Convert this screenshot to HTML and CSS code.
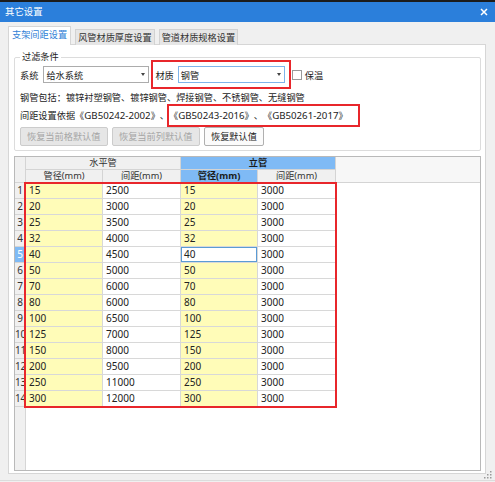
FILE: index.html
```html
<!DOCTYPE html>
<html lang="zh">
<head>
<meta charset="utf-8">
<title>其它设置</title>
<link rel="stylesheet" href="styles.css">
</head>
<body>
<div class="window">
  <div class="titlebar">
    <span class="title">其它设置</span>
    <svg class="close" width="8" height="8" viewBox="0 0 8 8"><path d="M1 1L7 7M7 1L1 7" stroke="#fff" stroke-width="1.5" fill="none"/></svg>
  </div>
  <div class="main">
    <div class="tabs">
      <div class="tab active">支架间距设置</div>
      <div class="tab">风管材质厚度设置</div>
      <div class="tab">管道材质规格设置</div>
    </div>
    <div class="panel">
      <fieldset class="group">
        <legend>过滤条件</legend>
        <div class="row r1">
          <span class="lbl">系统</span>
          <div class="combo sys"><span>给水系统</span><i class="arrow"></i></div>
          <span class="lbl lbl2">材质</span>
          <div class="combo mat"><span>钢管</span><i class="arrow"></i></div>
          <span class="check"></span>
          <span>保温</span>
        </div>
        <div class="row txt r2">钢管包括：镀锌衬塑钢管、镀锌钢管、焊接钢管、不锈钢管、无缝钢管</div>
        <div class="row txt">间距设置依据《<span class="lat">GB50242-2002</span>》、《<span class="lat">GB50243-2016</span>》、《<span class="lat">GB50261-2017</span>》</div>
        <div class="row btns">
          <button class="btn" disabled>恢复当前格默认值</button>
          <button class="btn" disabled>恢复当前列默认值</button>
          <button class="btn on">恢复默认值</button>
        </div>
      </fieldset>
      <div class="grid">
        <div class="gt">
          <div class="h corner"></div>
          <div class="h g1">水平管</div>
          <div class="h g2 blue bold">立管</div>
          <div class="h fill"></div>
          <div class="h">管径(mm)</div>
          <div class="h">间距(mm)</div>
          <div class="h blue bold">管径(mm)</div>
          <div class="h">间距(mm)</div>

          <div class="rh">1</div><div class="c y">15</div><div class="c">2500</div><div class="c y">15</div><div class="c">3000</div><div class="e"></div>
          <div class="rh">2</div><div class="c y">20</div><div class="c">3000</div><div class="c y">20</div><div class="c">3000</div><div class="e"></div>
          <div class="rh">3</div><div class="c y">25</div><div class="c">3500</div><div class="c y">25</div><div class="c">3000</div><div class="e"></div>
          <div class="rh">4</div><div class="c y">32</div><div class="c">4000</div><div class="c y">32</div><div class="c">3000</div><div class="e"></div>
          <div class="rh sel">5</div><div class="c y">40</div><div class="c">4500</div><div class="c cur">40</div><div class="c">3000</div><div class="e"></div>
          <div class="rh">6</div><div class="c y">50</div><div class="c">5000</div><div class="c y">50</div><div class="c">3000</div><div class="e"></div>
          <div class="rh">7</div><div class="c y">70</div><div class="c">6000</div><div class="c y">70</div><div class="c">3000</div><div class="e"></div>
          <div class="rh">8</div><div class="c y">80</div><div class="c">6000</div><div class="c y">80</div><div class="c">3000</div><div class="e"></div>
          <div class="rh">9</div><div class="c y">100</div><div class="c">6500</div><div class="c y">100</div><div class="c">3000</div><div class="e"></div>
          <div class="rh">10</div><div class="c y">125</div><div class="c">7000</div><div class="c y">125</div><div class="c">3000</div><div class="e"></div>
          <div class="rh">11</div><div class="c y">150</div><div class="c">8000</div><div class="c y">150</div><div class="c">3000</div><div class="e"></div>
          <div class="rh">12</div><div class="c y">200</div><div class="c">9500</div><div class="c y">200</div><div class="c">3000</div><div class="e"></div>
          <div class="rh">13</div><div class="c y">250</div><div class="c">11000</div><div class="c y">250</div><div class="c">3000</div><div class="e"></div>
          <div class="rh">14</div><div class="c y">300</div><div class="c">12000</div><div class="c y">300</div><div class="c">3000</div><div class="e"></div>
        </div>
      </div>
    </div>
    <div class="footer"></div>
  </div>
  <div class="mark m1"></div>
  <div class="mark m2"></div>
  <div class="mark m3"></div>
  <svg class="grip" width="8" height="8" viewBox="0 0 8 8">
    <rect x="6" y="0" width="1.5" height="1.5" fill="#9a9a9a"/>
    <rect x="3" y="3" width="1.5" height="1.5" fill="#9a9a9a"/>
    <rect x="6" y="3" width="1.5" height="1.5" fill="#9a9a9a"/>
    <rect x="0" y="6" width="1.5" height="1.5" fill="#9a9a9a"/>
    <rect x="3" y="6" width="1.5" height="1.5" fill="#9a9a9a"/>
    <rect x="6" y="6" width="1.5" height="1.5" fill="#9a9a9a"/>
  </svg>
</div>
</body>
</html>
```
FILE: styles.css
```css
* { box-sizing: border-box; }
html, body { margin: 0; padding: 0; }
body {
  width: 495px;
  height: 482px;
  overflow: hidden;
  background: #f0f0f0;
  font-family: "Noto Sans", "Noto Sans CJK SC", sans-serif;
  font-size: 9.2px;
  color: #222;
  text-spacing-trim: space-all;
}
.window {
  position: relative;
  width: 495px;
  height: 482px;
  display: flex;
  flex-direction: column;
}
.titlebar {
  flex: none;
  height: 22px;
  background: #2b7fdb;
  border-top: 2px solid #1c1c1c;
  display: flex;
  align-items: center;
  justify-content: space-between;
  padding: 0 7px 0 5px;
  color: #fff;
  font-size: 9.4px;
}
.title { line-height: 20px; }
.close { display: block; }

.main {
  flex: 1;
  display: flex;
  flex-direction: column;
  padding: 4px 9px 0 8px;
}
.tabs {
  flex: none;
  height: 19px;
  display: flex;
  align-items: flex-end;
  gap: 4px;
  margin-bottom: -1px;
  position: relative;
  z-index: 1;
}
.tab {
  height: 16px;
  padding: 0 2px;
  background: #e6e6e6;
  border: 1px solid #d2d2d2;
  border-bottom: none;
  display: flex;
  align-items: center;
  color: #333;
  line-height: 1;
}
.tab.active {
  height: 19px;
  padding: 0 3px 2px;
  background: #fff;
  color: #2f7fd6;
  border-color: #d6d6d6;
}
.panel {
  flex: none;
  height: 430px;
  background: #fff;
  border: 1px solid #d6d6d6;
  padding: 6px 4px 2px 5px;
  display: flex;
  flex-direction: column;
}
.group {
  margin: 0;
  padding: 3px 5px 4px 5px;
  border: 1px solid #dcdcdc;
  border-radius: 2px;
  flex: none;
}
.group legend {
  padding: 0 2px;
  line-height: 12px;
  color: #222;
}
.row { display: flex; align-items: center; white-space: nowrap; }
.r1 { height: 17px; }
.lbl { margin-right: 5px; }
.lbl2 { margin-left: 6px; margin-right: 4px; }
.combo {
  height: 17px;
  border: 1px solid #acacac;
  background: #fff;
  display: flex;
  align-items: center;
  padding-left: 2px;
}
.combo.sys { width: 106px; }
.combo.mat { width: 107px; border-color: #7eb4ea; }
.arrow {
  margin-left: auto;
  margin-right: 3px;
  width: 0;
  height: 0;
  border-left: 2px solid transparent;
  border-right: 2px solid transparent;
  border-top: 3px solid #444;
}
.check {
  width: 10px;
  height: 10px;
  border: 1px solid #9a9a9a;
  background: #fff;
  margin-left: 7px;
  margin-right: 3px;
}
.txt { height: 18px; }
.r2 { margin-top: 5px; }
.lat { font-size: 9.7px; }
.btns { margin-top: 3px; gap: 4.5px; height: 19px; }
.btn {
  height: 19px;
  padding: 0 6px;
  border: 1px solid #cccccc;
  border-radius: 2px;
  background: #e6e6e6;
  color: #a5a5a5;
  font: inherit;
  line-height: 1;
}
.btn.on {
  background: #fbfbfb;
  border-color: #b0b0b0;
  color: #222;
}

.grid {
  flex: 1;
  margin-top: 5px;
  border: 1px solid #b9b9b9;
  background: linear-gradient(to right, #f0f0f0 0 10px, #d6d6d6 10px 11px, #fff 11px);
  overflow: hidden;
}
.gt {
  display: grid;
  grid-template-columns: 11px 77px 78px 77px 78px 1fr;
  grid-template-rows: 13px 13px repeat(14, 16px);
}
.h {
  background: #f0f0f0;
  border-right: 1px solid #d4d4d4;
  border-bottom: 1px solid #d4d4d4;
  display: flex;
  align-items: center;
  justify-content: center;
  color: #333;
  line-height: 1;
}
.corner { grid-row: 1 / 3; }
.g1 { grid-column: 2 / 4; }
.g2 { grid-column: 4 / 6; }
.fill { grid-column: 6; grid-row: 1 / 3; background: #f7f7f7; border-right: none; }
.blue { background: #7fbaf5; color: #1a1a1a; }
.bold { font-weight: bold; }
.rh {
  background: #f0f0f0;
  border-right: 1px solid #d4d4d4;
  border-bottom: 1px solid #d4d4d4;
  font-size: 10px;
  line-height: 15px;
  text-align: center;
  white-space: nowrap;
  color: #333;
  letter-spacing: -0.3px;
}
.rh.sel { background: #7fbaf5; color: #fff; }
.c {
  border-right: 1px solid #d8d8d8;
  border-bottom: 1px solid #d8d8d8;
  font-size: 10px;
  line-height: 15px;
  padding-left: 3px;
  white-space: nowrap;
  color: #222;
  background: #fff;
}
.c.y { background: #fffcb8; }
.c.cur { background: #fff; box-shadow: inset 0 0 0 1px #5b9bd5; }
.e { background: #fff; }

.footer {
  flex: 1;
  margin: 6px -9px 0 -8px;
  border-top: 1px solid #dcdcdc;
}
.mark {
  position: absolute;
  border: 2px solid #e8262b;
  pointer-events: none;
}
.m1 { left: 151px; top: 60px; width: 140px; height: 29px; }
.m2 { left: 167px; top: 104px; width: 193px; height: 23px; }
.m3 { left: 24px; top: 182px; width: 313px; height: 226px; }
.grip { position: absolute; right: 3px; bottom: 3px; }
```
